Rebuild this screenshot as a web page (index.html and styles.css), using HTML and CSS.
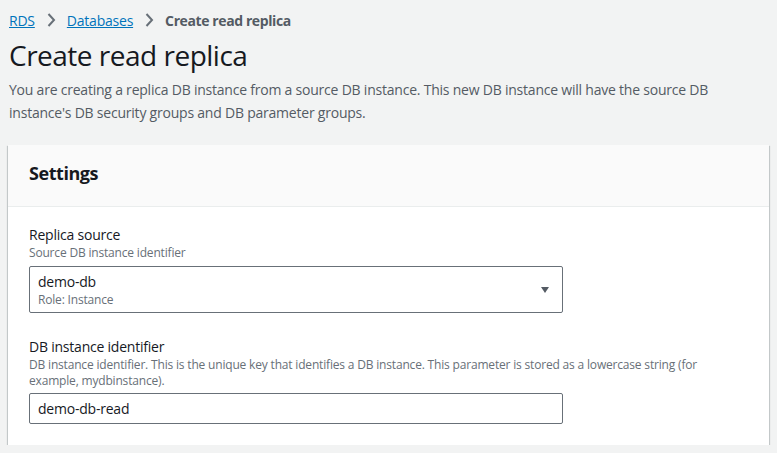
FILE: index.html
```html
<!DOCTYPE html>
<html>
<head>
<meta charset="utf-8">
<link rel="stylesheet" href="styles.css">
</head>
<body>
<div class="page">
  <nav class="crumbs">
    <a class="crumb-link" href="#">RDS</a>
    <svg class="chev" width="16" height="16" viewBox="0 0 16 16"><path d="M5.5 2 L11 8 L5.5 14" fill="none" stroke="#687078" stroke-width="2"/></svg>
    <a class="crumb-link" href="#">Databases</a>
    <svg class="chev" width="16" height="16" viewBox="0 0 16 16"><path d="M5.5 2 L11 8 L5.5 14" fill="none" stroke="#687078" stroke-width="2"/></svg>
    <span class="crumb-current">Create read replica</span>
  </nav>
  <h1 class="title">Create read replica</h1>
  <p class="desc">You are creating a replica DB instance from a source DB instance. This new DB instance will have the source DB instance's DB security groups and DB parameter groups.</p>
  <section class="card">
    <header class="card-head">Settings</header>
    <div class="card-body">
      <div class="field">
        <div class="label">Replica source</div>
        <div class="hint">Source DB instance identifier</div>
        <div class="select">
          <div class="select-text">
            <div class="select-value">demo-db</div>
            <div class="select-sub">Role: Instance</div>
          </div>
          <svg class="caret" width="8" height="6" viewBox="0 0 8 6"><path d="M0 0 H8 L4 6 Z" fill="#545b64"/></svg>
        </div>
      </div>
      <div class="field">
        <div class="label">DB instance identifier</div>
        <div class="hint">DB instance identifier. This is the unique key that identifies a DB instance. This parameter is stored as a lowercase string (for example, mydbinstance).</div>
        <div class="input">demo-db-read</div>
      </div>
    </div>
  </section>
</div>
</body>
</html>
```
FILE: styles.css
```css
html, body {
  margin: 0;
  padding: 0;
  background: #f2f3f3;
}
body {
  font-family: "Open Sans", "Noto Sans", sans-serif;
  color: #16191f;
  letter-spacing: -0.22px;
}
.page {
  padding: 8px 8px 0 8px;
}
.crumbs {
  display: flex;
  align-items: center;
  gap: 8px;
  height: 24px;
  padding-left: 1px;
  font-size: 14px;
}
.crumb-link {
  color: #0073bb;
  text-decoration: underline;
}
.crumb-current {
  color: #545b64;
  font-weight: bold;
  letter-spacing: -0.4px;
}
.chev {
  display: block;
}
.title {
  margin: 4px 0 0 1px;
  font-size: 28px;
  font-weight: 400;
  line-height: 38px;
  letter-spacing: -0.5px;
  color: #16191f;
}
.desc {
  margin: 5px 0 0 1px;
  font-size: 14px;
  line-height: 22.5px;
  color: #545b64;
  max-width: 740px;
}
.card {
  margin-top: 21px;
  background: #fff;
  box-shadow: 0 1px 1px 0 rgba(0,28,36,0.3), 1px 1px 1px 0 rgba(0,28,36,0.15), -1px 1px 1px 0 rgba(0,28,36,0.15);
}
.card-head {
  background: #fafafa;
  border-bottom: 1px solid #eaeded;
  padding: 14px 20px 19px 21px;
  font-size: 18px;
  font-weight: bold;
  line-height: 28px;
  letter-spacing: -0.45px;
}
.card-body {
  padding: 18px 20px 21px 21px;
  display: flex;
  flex-direction: column;
  gap: 24px;
}
.label {
  font-size: 14px;
  line-height: 20px;
}
.hint {
  font-size: 12px;
  line-height: 16px;
  color: #687078;
  letter-spacing: -0.18px;
}
.select {
  margin-top: 5px;
  width: 534px;
  height: 47px;
  border: 1px solid #687078;
  border-radius: 2px;
  box-sizing: border-box;
  display: flex;
  align-items: center;
  justify-content: space-between;
  padding: 1px 13px 0 8px;
}
.select-value {
  font-size: 14px;
  line-height: 20px;
}
.select-sub {
  font-size: 12px;
  line-height: 16px;
  color: #687078;
  letter-spacing: -0.18px;
}
.caret {
  display: block;
}
.input {
  margin-top: 4px;
  width: 534px;
  height: 31px;
  box-sizing: border-box;
  border: 1px solid #687078;
  border-radius: 2px;
  padding: 0 8px;
  display: flex;
  align-items: center;
  font-size: 14px;
}
```
